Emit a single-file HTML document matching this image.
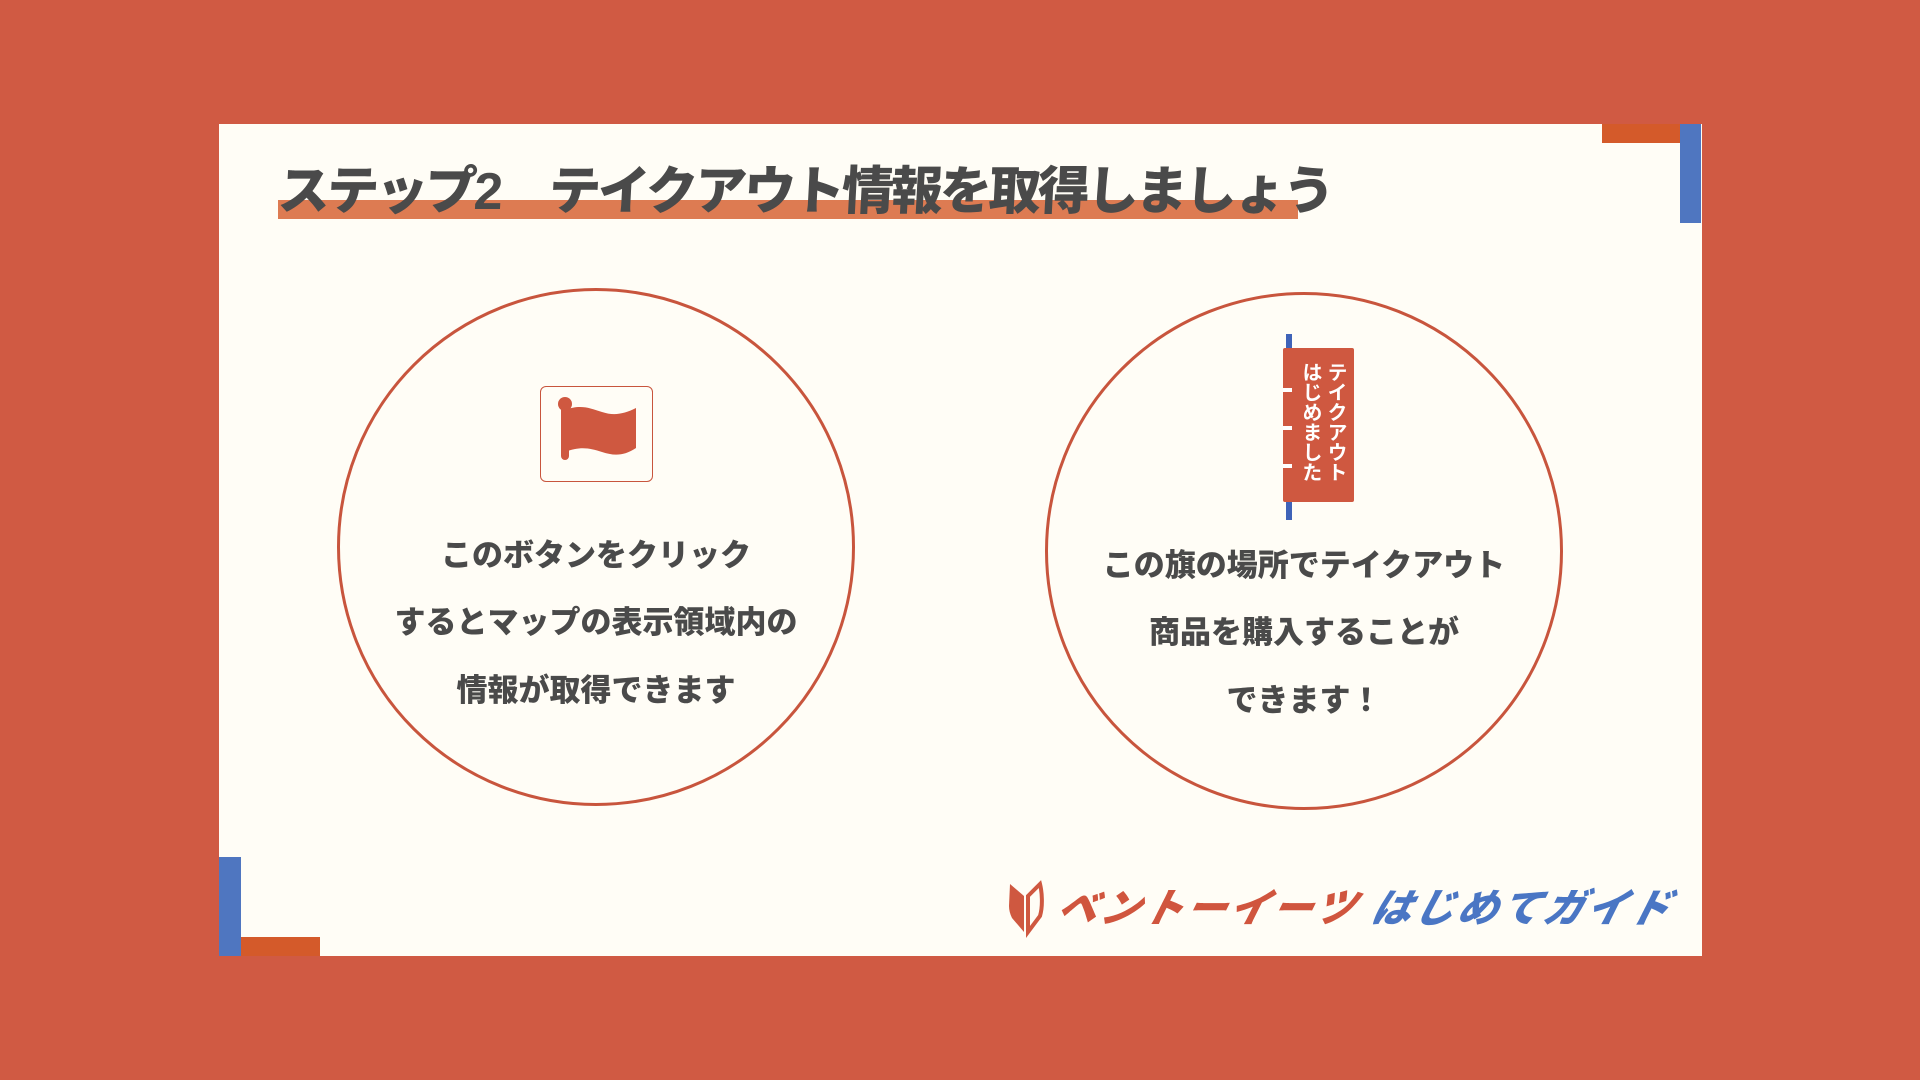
<!DOCTYPE html>
<html><head><meta charset="utf-8"><style>
*{margin:0;padding:0;box-sizing:border-box}
body{width:1920px;height:1080px;background:#d05a43;position:relative;overflow:hidden;font-family:"Liberation Sans","Noto Sans CJK JP",sans-serif}
.abs{position:absolute}
.card{left:219px;top:124px;width:1483px;height:832px;background:#fffdf6}
.title{left:278px;top:160px;font-size:52px;font-weight:900;color:#4a4a4a;white-space:nowrap;letter-spacing:-3px;line-height:64px;transform:skewX(-3deg)}
.circ{width:518px;height:518px;border:3px solid #c8553d;border-radius:50%}
.txt{width:600px;text-align:center;font-size:31px;font-weight:900;color:#4a4a4a;white-space:nowrap}
</style></head><body>
<div class="abs card"></div>
<div class="abs" style="left:1602px;top:124px;width:78px;height:19px;background:#d45a2a"></div>
<div class="abs" style="left:1680px;top:124px;width:21px;height:99px;background:#4f76c0"></div>
<div class="abs" style="left:219px;top:857px;width:22px;height:99px;background:#4f76c0"></div>
<div class="abs" style="left:241px;top:937px;width:79px;height:19px;background:#d45a2a"></div>
<div class="abs" style="left:278px;top:200px;width:1020px;height:19px;background:#dd7b52"></div>
<div class="abs title">ステップ2　テイクアウト情報を取得しましょう</div>

<div class="abs circ" style="left:337px;top:288px"></div>
<div class="abs circ" style="left:1045px;top:292px"></div>

<div class="abs" style="left:540px;top:386px;width:113px;height:96px;border:1.5px solid #c8553d;border-radius:6px"></div>
<svg class="abs" style="left:540px;top:386px" width="113" height="96" viewBox="0 0 113 96">
<rect x="21" y="16" width="8" height="58" rx="4" fill="#cf5840"/>
<circle cx="25" cy="18" r="7" fill="#cf5840"/>
<path d="M25 24 C40 18 50 22 62 26 C74 30 84 28 96 22 L96 62 C84 70 74 70 62 66 C50 62 40 60 25 66 Z" fill="#cf5840"/>
</svg>

<div class="abs txt" style="left:296px;top:530px">このボタンをクリック</div>
<div class="abs txt" style="left:296px;top:597px">するとマップの表示領域内の</div>
<div class="abs txt" style="left:296px;top:665px">情報が取得できます</div>

<div class="abs" style="left:1286px;top:334px;width:6px;height:186px;background:#3f63b8"></div>
<div class="abs" style="left:1283px;top:348px;width:71px;height:154px;background:#cf5840;border-radius:2px"></div>
<div class="abs" style="left:1283px;top:388px;width:9px;height:4px;background:#fff"></div>
<div class="abs" style="left:1283px;top:426px;width:9px;height:4px;background:#fff"></div>
<div class="abs" style="left:1283px;top:464px;width:9px;height:4px;background:#fff"></div>
<div class="abs" style="left:1324px;top:362px;width:22px;font-size:20px;line-height:22px;color:#fff;font-weight:700;writing-mode:vertical-rl">テイクアウト</div>
<div class="abs" style="left:1299px;top:362px;width:22px;font-size:20px;line-height:22px;color:#fff;font-weight:700;writing-mode:vertical-rl">はじめました</div>

<div class="abs txt" style="left:1004px;top:540px">この旗の場所でテイクアウト</div>
<div class="abs txt" style="left:1004px;top:607px">商品を購入することが</div>
<div class="abs txt" style="left:1004px;top:675px">できます！</div>

<svg class="abs" style="left:1006px;top:880px" width="40" height="60" viewBox="0 0 40 60">
<path d="M4 4 L18 16 L18 52 L6 38 C4 34 3 30 3 26 Z" fill="#cf5840"/>
<path d="M22 16 L34 4 C36 12 37 26 34 36 L22 52 Z" fill="none" stroke="#cf5840" stroke-width="4"/>
</svg>
<div class="abs" style="left:1058px;top:884px;font-size:40px;font-weight:900;font-style:italic;line-height:50px;white-space:nowrap;transform:skewX(-14deg);letter-spacing:3px"><span style="color:#d0553e">ベントーイーツ</span> <span style="color:#4a76c4">はじめてガイド</span></div>
</body></html>
